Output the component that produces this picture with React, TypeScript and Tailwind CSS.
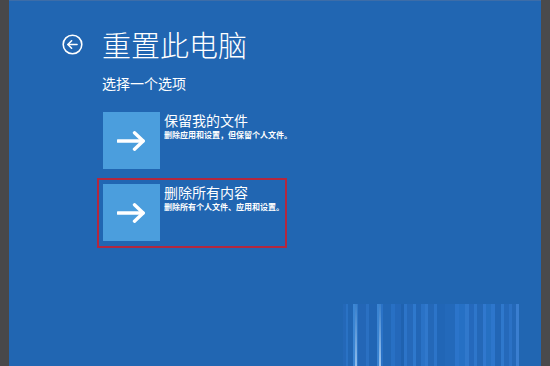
import React from "react";

const FONT = { fontFamily: '"Noto Sans CJK SC", "Noto Sans", sans-serif' };

const stripes: { w: number; c: string }[] = [
  { w: 3, c: "#2468b8" },
  { w: 2, c: "#2a72c4" },
  { w: 5, c: "#2166b4" },
  { w: 2, c: "#3b86d4" },
  { w: 2, c: "linear-gradient(#3a80cc,#8fbcea)" },
  { w: 1, c: "#2f78c8" },
  { w: 8, c: "#2366b6" },
  { w: 3, c: "#2a70c2" },
  { w: 8, c: "#2165b4" },
  { w: 2, c: "#3a84d2" },
  { w: 2, c: "linear-gradient(#3a80cc,#9cc4ee)" },
  { w: 2, c: "#2a72c6" },
  { w: 8, c: "#2267b6" },
  { w: 4, c: "#2870c4" },
  { w: 6, c: "#2468ba" },
  { w: 3, c: "#1f62b0" },
  { w: 3, c: "#2c74c8" },
  { w: 6, c: "#2569ba" },
  { w: 3, c: "#2e78cc" },
  { w: 5, c: "#2266b6" },
  { w: 4, c: "#2a72c6" },
  { w: 3, c: "#3078cc" },
  { w: 6, c: "#2468b8" },
  { w: 3, c: "#2c74c8" },
  { w: 8, c: "#2166b6" },
  { w: 10, c: "#2369ba" },
  { w: 4, c: "#2b74ca" },
  { w: 6, c: "#2670c4" },
  { w: 4, c: "#3078cc" },
  { w: 5, c: "#2569bc" },
  { w: 3, c: "#2e76ca" },
  { w: 6, c: "#2468b8" },
  { w: 3, c: "#3078ce" },
  { w: 5, c: "#2670c2" },
  { w: 4, c: "#2d76cc" },
  { w: 6, c: "#2266b6" },
  { w: 3, c: "#2f78cc" },
  { w: 5, c: "#2569ba" },
  { w: 3, c: "#2c72c6" },
  { w: 4, c: "#2468b8" },
  { w: 3, c: "#3a7ed0" },
];

function Arrow() {
  return (
    <svg width="29" height="20" viewBox="0 0 29 20" fill="none">
      <path d="M1 10 H26" stroke="white" strokeWidth="3.4" strokeLinecap="round" />
      <path
        d="M17.5 1.8 L26.2 10 L17.5 18.2"
        stroke="white"
        strokeWidth="3.4"
        strokeLinecap="round"
        strokeLinejoin="round"
      />
    </svg>
  );
}

function BackIcon() {
  return (
    <svg width="21" height="21" viewBox="0 0 21 21" fill="none">
      <circle cx="10.5" cy="10.5" r="9.3" stroke="white" strokeWidth="1.6" />
      <path d="M6 10.5 H15" stroke="white" strokeWidth="1.6" strokeLinecap="round" />
      <path
        d="M9.6 6.8 L5.9 10.5 L9.6 14.2"
        stroke="white"
        strokeWidth="1.6"
        strokeLinecap="round"
        strokeLinejoin="round"
      />
    </svg>
  );
}

function Option({
  title,
  desc,
  selected,
}: {
  title: string;
  desc: string;
  selected?: boolean;
}) {
  return (
    <div
      className={
        "flex w-[190px] pl-[4px] pt-[4px] pb-[5px] border-2 " +
        (selected ? "border-[#b3273f]" : "border-transparent")
      }
    >
      <div className="w-[57px] h-[57px] bg-[#4b9edd] flex items-center justify-center shrink-0">
        <Arrow />
      </div>
      <div className="pl-[4px] flex flex-col text-white">
        <div className="text-[14px] leading-[16px]">{title}</div>
        <div className="text-[8px] leading-[10px] font-bold mt-[2px] whitespace-nowrap">
          {desc}
        </div>
      </div>
    </div>
  );
}

export default function App() {
  return (
    <div className="w-[550px] h-[366px] flex bg-[#4a4a4c] overflow-hidden" style={FONT}>
      <div className="w-[9px] shrink-0 bg-[#48484a]" />
      <div className="relative flex-1 bg-[#2166b2] flex flex-col">
        <div className="h-[1px] bg-[#3d6da8]" />
        <div className="flex items-center pl-[53px] pt-[26px] gap-[19px]">
          <BackIcon />
          <div className="text-white text-[29px] leading-[34px] font-light">重置此电脑</div>
        </div>
        <div className="pl-[93px] mt-[12px] text-white text-[14px] leading-[20px]">
          选择一个选项
        </div>
        <div className="pl-[88px] mt-[13px] flex flex-col gap-[2px]">
          <Option title="保留我的文件" desc="删除应用和设置，但保留个人文件。" />
          <Option title="删除所有内容" desc="删除所有个人文件、应用和设置。" selected />
        </div>
        <div className="absolute right-0 bottom-0 w-[198px] h-[62px] flex">
          {stripes.map((s, i) => (
            <div key={i} className="h-full" style={{ width: s.w, background: s.c }} />
          ))}
        </div>
      </div>
      <div className="w-[9px] shrink-0 bg-[#4a4a4c]" />
    </div>
  );
}
